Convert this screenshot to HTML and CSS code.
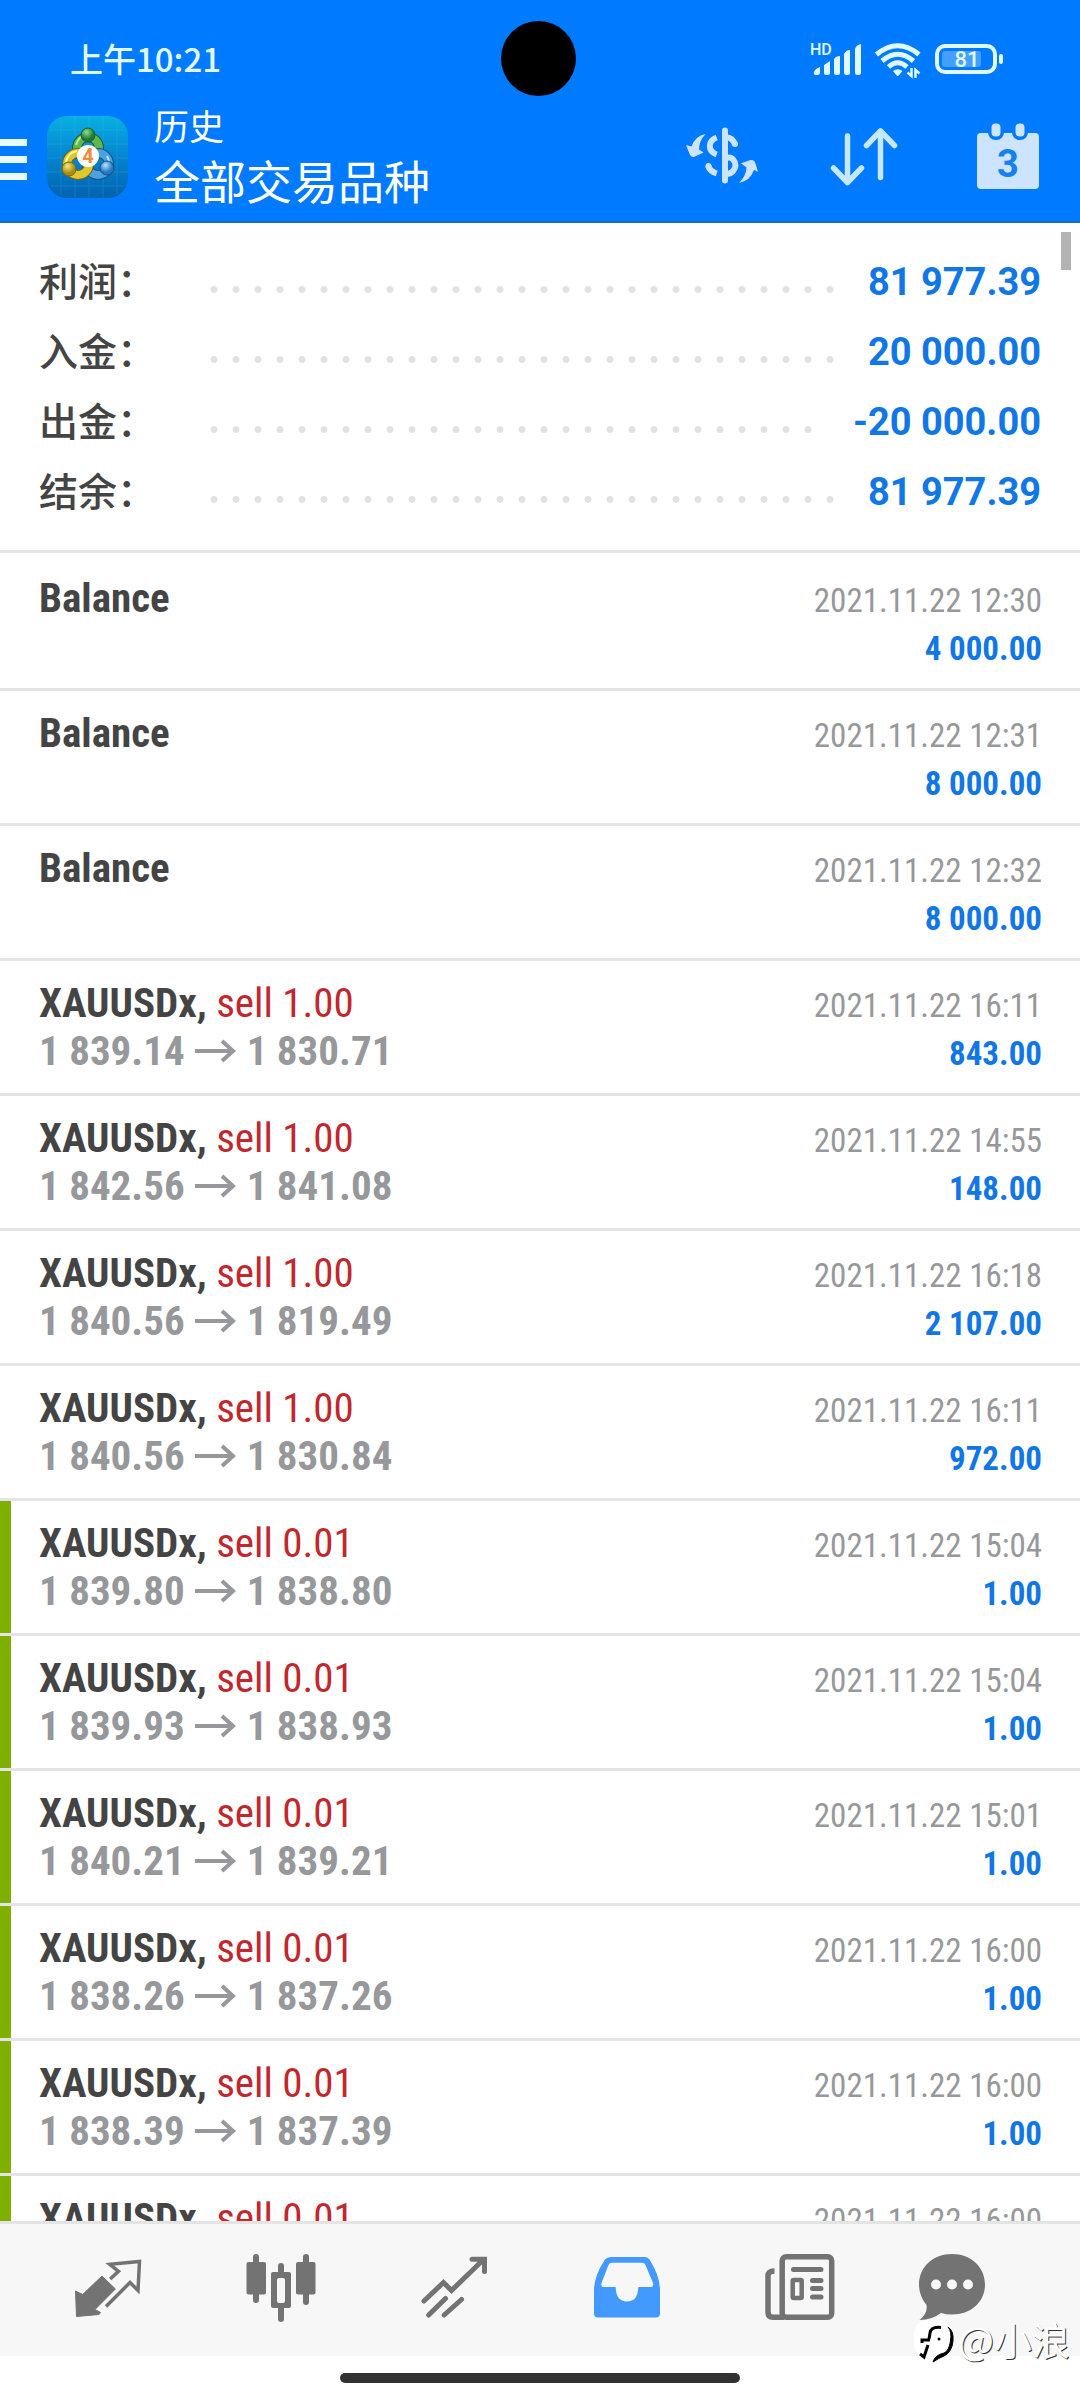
FILE: index.html
```html
<!DOCTYPE html>
<html lang="zh-CN">
<head>
<meta charset="utf-8">
<meta name="viewport" content="width=device-width, initial-scale=1">
<title>历史</title>
<link rel="stylesheet" href="styles.css">
</head>
<body>
<svg class="defs" aria-hidden="true">
  <symbol id="arrow" viewBox="0 0 42 24"><path d="M0 12H38M27 2L38 12L27 22" fill="none" stroke="currentColor" stroke-width="4"/></symbol>
</svg>

<header class="header">
  <div class="status">
    <span class="status-time">上午10:21</span>
    <div class="status-icons">
      <svg width="52" height="40" viewBox="0 0 52 40" fill="currentColor">
        <text x="0" y="15" class="hd">HD</text>
        <path d="M4 32Q5 29 10 27V33Q10 35 8 35H6Q3 35 4 32ZM14 25L20 21V33Q20 35 18 35H16Q14 35 14 33ZM24 19Q26 16 30 16V33Q30 35 28 35H26Q24 35 24 33ZM34 14Q36 10 40 10V33Q40 35 38 35H36Q34 35 34 33ZM45 9Q46 5 51 4V33Q51 35 49 35H47Q45 35 45 33Z"/>
      </svg>
      <svg width="48" height="40" viewBox="0 0 48 40" fill="none" stroke="currentColor" stroke-width="5">
        <path d="M2.500 14.500Q23.700-3 45 14.500M8 21Q23.700 7.500 39.500 21M14.500 27Q23.700 18.500 33 27"/>
        <path d="M19 31Q23.700 27.500 28.500 31L24.700 35.500Q23.700 36.500 22.700 35.500Z" fill="currentColor" stroke="none"/>
        <path d="M37.500 28V36L33.500 32.500M41.500 38V30L45.500 33.500" stroke-width="2.500"/>
      </svg>
      <svg class="battery" width="70" height="40" viewBox="0 0 70 40">
        <rect x="3" y="6" width="58" height="26" rx="8" fill="none" stroke="currentColor" stroke-width="4"/>
        <rect x="8" y="11" width="39" height="16" rx="3" fill="currentColor" opacity=".3"/>
        <rect x="65" y="14" width="4" height="10" rx="2" fill="currentColor"/>
        <text x="33" y="27" text-anchor="middle" class="charge" fill="currentColor">81</text>
      </svg>
    </div>
    <span class="camera"></span>
  </div>
  <div class="appbar">
    <button class="icon-btn menu" aria-label="菜单">
      <svg width="27" height="41" viewBox="0 0 27 41" fill="currentColor"><path d="M0 0H27V7H0ZM0 17H27V24H0ZM0 34H27V41H0Z"/></svg>
    </button>
    <svg class="logo" width="81" height="82" viewBox="0 0 81 82">
      <defs>
        <linearGradient id="lg" x1="0" y1="0" x2="0" y2="1"><stop offset="0" stop-color="#08b0e2"/><stop offset=".5" stop-color="#0484d0"/><stop offset="1" stop-color="#0262b0"/></linearGradient>
        <radialGradient id="gg" cx=".4" cy=".3"><stop offset="0" stop-color="#8fe08a"/><stop offset="1" stop-color="#1f7a35"/></radialGradient>
        <radialGradient id="yg" cx=".4" cy=".3"><stop offset="0" stop-color="#f5ea80"/><stop offset="1" stop-color="#a98c12"/></radialGradient>
        <radialGradient id="bg" cx=".4" cy=".3"><stop offset="0" stop-color="#b5e4ff"/><stop offset="1" stop-color="#2377bd"/></radialGradient>
      </defs>
      <rect width="81" height="82" rx="20" fill="url(#lg)"/>
      <path d="M14 3V79M28 0V82M42 0V82M56 0V82M70 4V78M3 14H78M0 28H81M0 42H81M0 56H81M4 70H77" stroke="#5cc8f0" stroke-width="1" opacity=".18"/>
      <g fill="none">
        <circle cx="41" cy="32" r="11" stroke="#1c5c30" stroke-width="10"/>
        <circle cx="41" cy="32" r="11" stroke="#5fb84e" stroke-width="8"/>
        <path d="M29 29Q32 19 41 19" stroke="#b5e89a" stroke-width="2"/>
        <circle cx="51" cy="48" r="11" stroke="#174f80" stroke-width="10"/>
        <circle cx="51" cy="48" r="11" stroke="#4aa3e0" stroke-width="8"/>
        <path d="M60 40Q65 49 59 57" stroke="#b9e3fb" stroke-width="2"/>
        <circle cx="31" cy="48" r="11" stroke="#75640f" stroke-width="10"/>
        <circle cx="31" cy="48" r="11" stroke="#dcc932" stroke-width="8"/>
        <path d="M19 46Q21 36 30 35" stroke="#faf3a0" stroke-width="2"/>
      </g>
      <circle cx="41" cy="19" r="7" fill="url(#gg)" stroke="#1c5c30"/>
      <circle cx="22" cy="53" r="7" fill="url(#yg)" stroke="#75640f"/>
      <circle cx="60" cy="52" r="7" fill="url(#bg)" stroke="#174f80"/>
      <circle cx="41" cy="40" r="11" fill="#fff"/>
      <text x="41" y="47" text-anchor="middle" class="logo-num">4</text>
    </svg>
    <div class="titles">
      <div class="subtitle">历史</div>
      <h1 class="title">全部交易品种</h1>
    </div>
    <div class="actions">
      <button class="icon-btn" aria-label="货币">
        <svg width="76" height="76" viewBox="0 0 76 76" fill="none" stroke="currentColor" stroke-width="6">
          <path d="M41 9.500V59.500" stroke-linecap="round"/>
          <path d="M32.700 16.500C23.500 20 23.500 30 32.700 33.500M42 16Q49.500 17 51 24M42 37C49 35 51.500 41 51.500 44.500S48 53 42 53M24 44.500Q26 50.500 32.700 52.500"/>
          <circle cx="51" cy="23" r="3" fill="currentColor" stroke="none"/><circle cx="24.500" cy="45" r="3" fill="currentColor" stroke="none"/>
          <path d="M21.500 13Q11 15 7.500 25.500L2 24L6 34Q8 37 11 35.500L19.500 31.500L15 28.500Q15 20 21.500 13ZM55 62Q66 60 70 49L74 50.700L71 41Q69.500 38.500 66.500 39L57 42.300L62.500 46.500Q62 55 55 62Z" fill="currentColor" stroke="none"/>
        </svg>
      </button>
      <button class="icon-btn sort" aria-label="排序">
        <svg width="76" height="76" viewBox="0 0 76 76" fill="none" stroke="currentColor" stroke-width="5.500" stroke-linecap="round" stroke-linejoin="round">
          <path d="M20.500 15V61M6.500 47L20.500 61.500L34.500 47M53.500 56.500V10M39.500 24.500L53.500 10L67.500 24.500"/>
        </svg>
      </button>
      <button class="icon-btn" aria-label="日期">
        <svg width="76" height="76" viewBox="0 0 76 76" fill="currentColor">
          <rect x="7" y="12" width="62" height="56" rx="4"/>
          <g class="rings"><rect x="21.500" y="2.500" width="9" height="13" rx="4"/><rect x="45.500" y="2.500" width="9" height="13" rx="4"/></g>
          <text x="38" y="56" text-anchor="middle" class="cal-num">3</text>
        </svg>
      </button>
    </div>
  </div>
</header>

<main class="content">
  <span class="scroll-thumb"></span>
  <dl class="summary">
    <div class="sum-row"><dt>利润：</dt><dd>81 977.39</dd></div>
    <div class="sum-row"><dt>入金：</dt><dd>20 000.00</dd></div>
    <div class="sum-row"><dt>出金：</dt><dd>-20 000.00</dd></div>
    <div class="sum-row"><dt>结余：</dt><dd>81 977.39</dd></div>
  </dl>
  <ul class="deals">
    <li class="deal"><div class="line"><b class="name">Balance</b><time>2021.11.22 12:30</time></div><div class="line"><span class="prices">&nbsp;</span><b class="profit">4 000.00</b></div></li>
    <li class="deal"><div class="line"><b class="name">Balance</b><time>2021.11.22 12:31</time></div><div class="line"><span class="prices">&nbsp;</span><b class="profit">8 000.00</b></div></li>
    <li class="deal"><div class="line"><b class="name">Balance</b><time>2021.11.22 12:32</time></div><div class="line"><span class="prices">&nbsp;</span><b class="profit">8 000.00</b></div></li>
    <li class="deal"><div class="line"><span class="name"><b>XAUUSDx,</b> <span class="sell">sell 1.00</span></span><time>2021.11.22 16:11</time></div><div class="line"><span class="prices">1 839.14<svg class="arrow"><use href="#arrow"/></svg>1 830.71</span><b class="profit">843.00</b></div></li>
    <li class="deal"><div class="line"><span class="name"><b>XAUUSDx,</b> <span class="sell">sell 1.00</span></span><time>2021.11.22 14:55</time></div><div class="line"><span class="prices">1 842.56<svg class="arrow"><use href="#arrow"/></svg>1 841.08</span><b class="profit">148.00</b></div></li>
    <li class="deal"><div class="line"><span class="name"><b>XAUUSDx,</b> <span class="sell">sell 1.00</span></span><time>2021.11.22 16:18</time></div><div class="line"><span class="prices">1 840.56<svg class="arrow"><use href="#arrow"/></svg>1 819.49</span><b class="profit">2 107.00</b></div></li>
    <li class="deal"><div class="line"><span class="name"><b>XAUUSDx,</b> <span class="sell">sell 1.00</span></span><time>2021.11.22 16:11</time></div><div class="line"><span class="prices">1 840.56<svg class="arrow"><use href="#arrow"/></svg>1 830.84</span><b class="profit">972.00</b></div></li>
    <li class="deal tp"><div class="line"><span class="name"><b>XAUUSDx,</b> <span class="sell">sell 0.01</span></span><time>2021.11.22 15:04</time></div><div class="line"><span class="prices">1 839.80<svg class="arrow"><use href="#arrow"/></svg>1 838.80</span><b class="profit">1.00</b></div></li>
    <li class="deal tp"><div class="line"><span class="name"><b>XAUUSDx,</b> <span class="sell">sell 0.01</span></span><time>2021.11.22 15:04</time></div><div class="line"><span class="prices">1 839.93<svg class="arrow"><use href="#arrow"/></svg>1 838.93</span><b class="profit">1.00</b></div></li>
    <li class="deal tp"><div class="line"><span class="name"><b>XAUUSDx,</b> <span class="sell">sell 0.01</span></span><time>2021.11.22 15:01</time></div><div class="line"><span class="prices">1 840.21<svg class="arrow"><use href="#arrow"/></svg>1 839.21</span><b class="profit">1.00</b></div></li>
    <li class="deal tp"><div class="line"><span class="name"><b>XAUUSDx,</b> <span class="sell">sell 0.01</span></span><time>2021.11.22 16:00</time></div><div class="line"><span class="prices">1 838.26<svg class="arrow"><use href="#arrow"/></svg>1 837.26</span><b class="profit">1.00</b></div></li>
    <li class="deal tp"><div class="line"><span class="name"><b>XAUUSDx,</b> <span class="sell">sell 0.01</span></span><time>2021.11.22 16:00</time></div><div class="line"><span class="prices">1 838.39<svg class="arrow"><use href="#arrow"/></svg>1 837.39</span><b class="profit">1.00</b></div></li>
    <li class="deal tp"><div class="line"><span class="name"><b>XAUUSDx,</b> <span class="sell">sell 0.01</span></span><time>2021.11.22 16:00</time></div></li>
  </ul>
</main>

<footer class="footer">
  <nav class="tabs">
    <button class="tab" aria-label="行情">
      <svg width="72" height="72" viewBox="0 0 72 72">
        <path d="M3.500 37L10.600 40.500L30 22L43.400 35L23 55.500L28.500 58.500L27 60.500L4.500 62.500Z" fill="currentColor" stroke="currentColor" stroke-linejoin="round"/>
        <path d="M38.200 25L46.500 17.300L37.800 10.300L67.500 7.500L66 36.500L58 28.500L34 52.500" fill="none" stroke="currentColor" stroke-width="3.500"/>
      </svg>
    </button>
    <button class="tab" aria-label="图表">
      <svg width="72" height="72" viewBox="0 0 72 72" fill="none" stroke="currentColor" stroke-width="6" stroke-linecap="round">
        <path d="M11 3V46M36 12V20M36 54V65M61 3V48"/>
        <g fill="currentColor" stroke="none"><rect x="1.500" y="8" width="19.500" height="32.500" rx="2"/><rect x="51" y="8" width="19.500" height="32.500" rx="2"/><path fill-rule="evenodd" d="M28 18H44Q46 18 46 20V52Q46 54 44 54H28Q26 54 26 52V20Q26 18 28 18ZM34 24Q32 24 32 26V47Q32 49 34 49H38Q40 49 40 47V26Q40 24 38 24Z"/></g>
      </svg>
    </button>
    <button class="tab" aria-label="交易">
      <svg width="72" height="72" viewBox="0 0 72 72" fill="none" stroke="currentColor" stroke-width="5" stroke-linecap="round">
        <path d="M6 47L25.500 28.500L33.500 36.500L65 6M54 5.200H66.500V17.500M10.700 61L27.500 44.500M26.200 61L43.500 45.500"/>
      </svg>
    </button>
    <button class="tab active" aria-label="历史">
      <svg width="72" height="72" viewBox="0 0 72 72" fill="currentColor">
        <path fill-rule="evenodd" d="M20 3H54Q57 3 58.500 5.500Q69 22 69 36V59.500Q69 63.500 65 63.500H7Q3 63.500 3 59.500V36Q3 22 14 5.500Q16 3 20 3ZM21 8.700Q18.500 8.700 17.500 11L10.500 29Q9.500 33 12.500 33H24.600Q25 47.500 36 47.500T47.300 33H59Q63 33 62 29L54.500 11Q53.500 8.700 51 8.700Z"/>
      </svg>
    </button>
    <button class="tab" aria-label="新闻">
      <svg width="72" height="72" viewBox="0 0 72 72" fill="none" stroke="currentColor" stroke-width="5.500">
        <rect x="18.200" y="2.800" width="49.500" height="60.500" rx="4"/>
        <path d="M10.500 17Q4 17 4 22V58Q4 63.300 9 63.300H20"/>
        <path d="M29.500 15.500H57M48.500 26.500H57M48.500 34.500H57M48.500 43H57" stroke-linecap="round" stroke-width="5"/>
        <rect x="28.700" y="26" width="9" height="18" stroke-width="4.500" rx="1"/>
      </svg>
    </button>
    <button class="tab tab-last" aria-label="消息">
      <svg width="72" height="72" viewBox="0 0 72 72" fill="currentColor">
        <path d="M36 0C55 0 69 13 69 30.500S55 60.500 36 60.500Q30 60.500 25 59Q16 66 3.500 66Q12 59 10.500 51Q3 42 3 30.500C3 13 17 0 36 0Z"/>
        <g fill="#f7f7f7"><circle cx="20" cy="30.500" r="5"/><circle cx="36" cy="30.500" r="5"/><circle cx="52" cy="30.500" r="5"/></g>
      </svg>
    </button>
  </nav>
  <div class="gesture"><span class="gesture-bar"></span></div>
  <div class="watermark">
    <svg width="42" height="46" viewBox="0 0 42 46">
      <path d="M12 1H30Q40 4 40 16V26Q39 34 30 37L22 41L20 38H10Q2 35 1 26V14Q2 4 12 1Z" fill="#fff"/>
      <path d="M28 8.500Q18 7.500 17 14L16 20M9 24V21H17M15 26L11 38L7 35" fill="none" stroke="#000" stroke-width="3"/>
      <path d="M35 8Q39 12 37.500 22T31 34Q22 36 20 43Q26 39 31 37Q39 33 40 22Q41 12 35 8Z" fill="#000" stroke="#000"/>
      <circle cx="26" cy="20" r="1.500"/>
    </svg>
    <span>@小浪</span>
  </div>
</footer>
</body>
</html>
```
FILE: styles.css
```css
:root {
  --blue: #007aff;
  --line: #e4e4e4;
  --cond: "Roboto Condensed", Roboto, sans-serif;
  --cjk: "Noto Sans CJK SC", sans-serif;
}

* { box-sizing: border-box; }

body {
  margin: 0;
  height: 100vh;
  display: flex;
  flex-direction: column;
  background: #fff;
  font-family: Roboto, var(--cjk);
}

button {
  padding: 0;
  border: 0;
  background: none;
  color: inherit;
}

svg { display: block; flex: none; }
.defs { position: absolute; width: 0; height: 0; }

/* header */
.header {
  background: var(--blue);
  border-bottom: 2px solid #1a6fc4;
  color: #fff;
}

.status {
  position: relative;
  display: flex;
  justify-content: space-between;
  align-items: flex-start;
  padding: 40px 76px 0 70px;
  color: #e0f8ff;
}

.status-time {
  font: 500 33px/36px var(--cjk);
}

.status-icons { display: flex; gap: 12px; }
.hd { font: 500 16px Roboto, sans-serif; }
.charge { font: 500 22px Roboto, sans-serif; }

.camera {
  position: absolute;
  top: 21px;
  left: 50%;
  width: 75px;
  height: 75px;
  margin-left: -39px;
  border-radius: 50%;
  background: #000;
}

.appbar {
  display: flex;
  align-items: center;
  padding: 24px 34px 7px 0;
}

.menu { color: #e8faff; }
.logo { margin: 0 26px 4px 20px; }
.logo-num { font: 700 20px Roboto, sans-serif; fill: #f08a3c; }
.titles { flex: 1; padding-bottom: 2px; font-family: var(--cjk); }
.subtitle { font-size: 35px; line-height: 42px; }
.title { margin: 0; font-size: 46px; font-weight: 400; line-height: 66px; }
.actions { display: flex; gap: 67px; color: #cce4ff; }
.sort { color: #c4e8ff; }
.rings { stroke: var(--blue); stroke-width: 7px; paint-order: stroke; }
.cal-num { font: 700 38px Roboto, sans-serif; fill: #1580f0; }

/* account totals */
.content {
  position: relative;
  flex: 1;
  min-height: 0;
  overflow: hidden;
}

.scroll-thumb {
  position: absolute;
  top: 9px;
  right: 9px;
  width: 10px;
  height: 38px;
  background: #b3b3b3;
}

.summary {
  margin: 0;
  padding: 24px 39px 23px;
  border-bottom: 3px solid var(--line);
}

.sum-row {
  display: flex;
  align-items: center;
  height: 70px;
}

.sum-row dt {
  align-self: flex-start;
  width: 164px;
  font: 500 39px/64px var(--cjk);
  color: #444;
}

.sum-row::before {
  content: "";
  order: 1;
  flex: 1;
  height: 7px;
  margin: 14px 28px 0 0;
  background: radial-gradient(circle at 11px 50%, #e2e2e2 3px, transparent 4px) 0 0 / 22px 7px repeat-x;
}

.sum-row dd {
  order: 2;
  margin: 0;
  font-size: 38px;
  font-weight: 700;
  color: #1177e6;
}

/* deals */
.deals {
  margin: 0;
  padding: 3px 0 0;
  list-style: none;
  font-family: var(--cond);
}

.deal {
  position: relative;
  height: 135px;
  padding: 18px 38px 0 39px;
  border-bottom: 3px solid var(--line);
}

.tp::before {
  content: "";
  position: absolute;
  inset: 0 auto 0 0;
  width: 11px;
  background: #7fb000;
}

.line {
  display: flex;
  justify-content: space-between;
  align-items: baseline;
  height: 48px;
  line-height: 48px;
}

.name { font-size: 41px; color: #444; }
.sell { color: #c1272d; }
.prices {
  display: flex;
  align-items: center;
  font-size: 41px;
  font-weight: 700;
  color: #97989b;
}
.arrow { width: 42px; height: 24px; margin: 0 10px; }
.deal time { font-size: 33px; color: #97989b; }
.profit { font-size: 33px; color: #1177e6; }

/* bottom bar */
.footer { position: relative; }

.tabs {
  display: flex;
  padding: 30px 62px 30px 21px;
  border-top: 3px solid var(--line);
  background: #f7f7f7;
  color: #737373;
}

.tab {
  flex: 173;
  display: flex;
  justify-content: center;
}

.tab-last { flex: 132; }
.active { color: #429aff; }

.gesture {
  display: flex;
  justify-content: center;
  height: 44px;
  padding-top: 17px;
}

.gesture-bar {
  width: 400px;
  height: 10px;
  border-radius: 5px;
  background: #333;
}

.watermark {
  position: absolute;
  right: 10px;
  bottom: 35px;
  display: flex;
  align-items: center;
  gap: 3px;
  font: 400 38px/40px var(--cjk);
  color: #fff;
  text-shadow: 1px 1px 0 #333;
}

.watermark span { padding-bottom: 6px; }
```
